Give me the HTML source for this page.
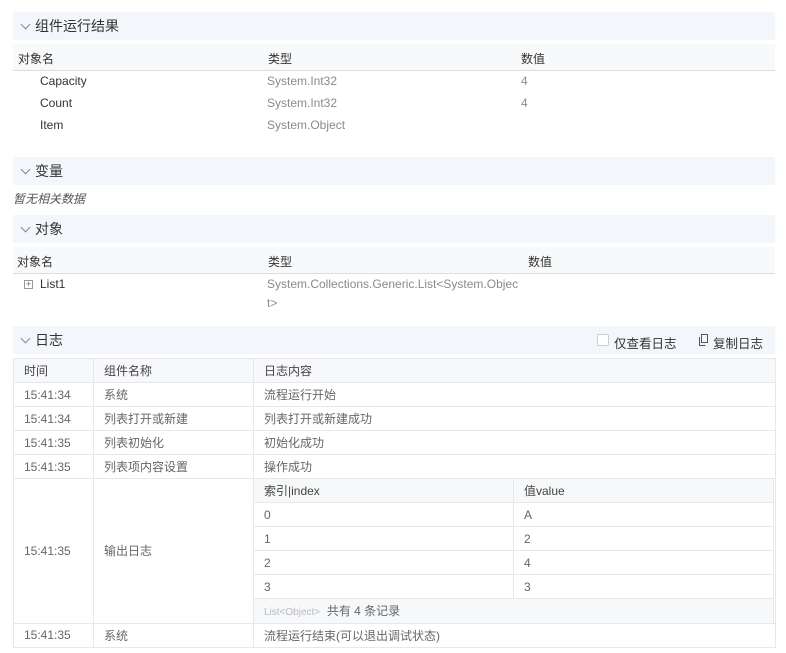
<!DOCTYPE html>
<html><head><meta charset="utf-8"><style>
*{margin:0;padding:0;box-sizing:border-box}
body{width:786px;height:653px;background:#fff;font-family:"Liberation Sans","Noto Sans CJK SC",sans-serif;font-size:12px;color:#333;position:relative;overflow:hidden}
.a{position:absolute;white-space:nowrap}
.hd{position:absolute;left:13px;width:762px;height:28px;background:#f3f6fa;font-size:14px;color:#333;line-height:28px;padding-left:22px}
.hd:before{content:"";position:absolute;left:9px;top:9px;width:6px;height:6px;border-right:1px solid #888;border-bottom:1px solid #888;transform:rotate(45deg)}
.g{color:#8a8a8a}
.line{position:absolute;height:1px;background:#ddd}
table{position:absolute;border-collapse:collapse;table-layout:fixed}
td{border:1px solid #e6e8ee;height:24px;padding-left:10px;color:#666;font-size:12px;white-space:nowrap}
tr.h td{background:#f7f8fa;color:#444}
</style></head><body>
<div class="hd" style="top:12px">组件运行结果</div>
<div class="a" style="left:13px;top:44px;width:762px;height:26px;background:#f8f9fa"></div>
<div class="line" style="left:13px;top:70px;width:762px"></div>
<div class="a" style="left:18px;top:50px">对象名</div>
<div class="a" style="left:268px;top:50px">类型</div>
<div class="a" style="left:521px;top:50px">数值</div>
<div class="a" style="left:40px;top:74px">Capacity</div>
<div class="a g" style="left:267px;top:74px">System.Int32</div>
<div class="a g" style="left:521px;top:74px">4</div>
<div class="a" style="left:40px;top:96px">Count</div>
<div class="a g" style="left:267px;top:96px">System.Int32</div>
<div class="a g" style="left:521px;top:96px">4</div>
<div class="a" style="left:40px;top:118px">Item</div>
<div class="a g" style="left:267px;top:118px">System.Object</div>

<div class="hd" style="top:157px">变量</div>
<div class="a" style="left:13px;top:190px;font-style:italic;color:#555">暂无相关数据</div>
<div class="hd" style="top:215px">对象</div>
<div class="a" style="left:13px;top:247px;width:762px;height:26px;background:#f8f9fa"></div>
<div class="line" style="left:13px;top:273px;width:762px"></div>
<div class="a" style="left:17px;top:253px">对象名</div>
<div class="a" style="left:268px;top:253px">类型</div>
<div class="a" style="left:528px;top:253px">数值</div>
<div class="a" style="left:24px;top:280px;width:9px;height:9px;border:1px solid #999;font-size:9px;line-height:7px;text-align:center;color:#666">+</div>
<div class="a" style="left:40px;top:277px">List1</div>
<div class="a g" style="left:267px;top:277px">System.Collections.Generic.List&lt;System.Objec</div>
<div class="a g" style="left:267px;top:296px">t&gt;</div>

<div class="hd" style="top:326px">日志</div>
<div class="a" style="left:597px;top:334px;width:12px;height:12px;border:1px solid #ccc;background:#fff;border-radius:2px"></div>
<div class="a" style="left:614px;top:333px;font-size:12.5px">仅查看日志</div>
<svg class="a" style="left:698px;top:334px" width="11" height="12" viewBox="0 0 11 12"><rect x="3.5" y="0.5" width="6" height="8" fill="none" stroke="#555"/><path d="M1.5 3v8.5h6" fill="none" stroke="#555"/></svg>
<div class="a" style="left:713px;top:333px;font-size:12.5px">复制日志</div>

<table style="left:13px;top:358px;width:762px">
<colgroup><col style="width:80px"><col style="width:160px"><col style="width:522px"></colgroup>
<tr class="h"><td>时间</td><td>组件名称</td><td>日志内容</td></tr>
<tr><td>15:41:34</td><td>系统</td><td>流程运行开始</td></tr>
<tr><td>15:41:34</td><td>列表打开或新建</td><td>列表打开或新建成功</td></tr>
<tr><td>15:41:35</td><td>列表初始化</td><td>初始化成功</td></tr>
<tr><td>15:41:35</td><td>列表项内容设置</td><td>操作成功</td></tr>
<tr><td style="height:144px">15:41:35</td><td>输出日志</td><td style="padding:0;vertical-align:top;position:relative">
<table style="position:static;width:520px;margin-top:-1px;margin-left:-1px">
<colgroup><col style="width:260px"><col style="width:260px"></colgroup>
<tr class="h"><td>索引|index</td><td>值value</td></tr>
<tr><td>0</td><td>A</td></tr>
<tr><td>1</td><td>2</td></tr>
<tr><td>2</td><td>4</td></tr>
<tr><td>3</td><td>3</td></tr>
<tr><td colspan="2" style="background:#f7f8fa;border-bottom:none"><span style="font-size:10px;color:#bbb">List&lt;Object&gt;</span>&nbsp; 共有 4 条记录</td></tr>
</table></td></tr>
<tr><td>15:41:35</td><td>系统</td><td>流程运行结束(可以退出调试状态)</td></tr>
</table>
</body></html>
